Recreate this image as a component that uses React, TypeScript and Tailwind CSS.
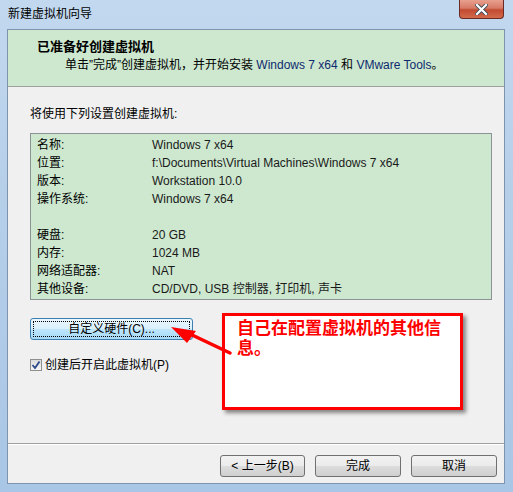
import React from 'react'

const rows: [string, string][] = [
  ['名称:', 'Windows 7 x64'],
  ['位置:', 'f:\\Documents\\Virtual Machines\\Windows 7 x64'],
  ['版本:', 'Workstation 10.0'],
  ['操作系统:', 'Windows 7 x64'],
  ['', ''],
  ['硬盘:', '20 GB'],
  ['内存:', '1024 MB'],
  ['网络适配器:', 'NAT'],
  ['其他设备:', 'CD/DVD, USB 控制器, 打印机, 声卡'],
]

function WinButton({ children, focused }: { children: React.ReactNode; focused?: boolean }) {
  return (
    <button
      className={
        focused
          ? 'h-[22px] w-full rounded-[3px] border border-[#3c7fb1] bg-[linear-gradient(#eaf6fd_0%,#d9f0fc_50%,#bee6fd_51%,#a7d9f5_100%)] p-[2px] text-[12px] text-black'
          : 'h-[22px] w-full rounded-[3px] border border-[#707070] bg-[linear-gradient(#f2f2f2_0%,#ebebeb_50%,#dddddd_51%,#cfcfcf_100%)] text-[12px] text-black'
      }
    >
      {focused ? (
        <span className='flex h-full w-full items-center justify-center border border-dotted border-black'>{children}</span>
      ) : (
        children
      )}
    </button>
  )
}

function App() {
  return (
    <div
      className='relative h-[492px] w-[513px] overflow-hidden bg-[linear-gradient(180deg,#c2d8ef_0%,#b6cfe9_40%,#a9c6e6_100%)] text-black'
      style={{ fontFamily: '"Liberation Sans", "Noto Sans CJK SC", sans-serif' }}
    >
      {/* title bar */}
      <div className='flex h-[29px] items-start justify-between'>
        <span className='pl-[8px] pt-[5px] text-[12px] leading-[18px] text-black'>新建虚拟机向导</span>
        <div className='mr-[9px] flex h-[19px] w-[45px] items-center justify-center rounded-b-[4px] border border-t-0 border-[#6b2b24] bg-[linear-gradient(#e8a08f_0%,#d67a66_45%,#c24a31_55%,#d26a4a_100%)]'>
          <svg width='13' height='11' viewBox='0 0 13 11'>
            <path d='M2 1 L11 10 M11 1 L2 10' stroke='#404a58' strokeWidth='4' strokeLinecap='square' />
            <path d='M2 1 L11 10 M11 1 L2 10' stroke='#ffffff' strokeWidth='2.2' strokeLinecap='square' />
          </svg>
        </div>
      </div>

      {/* client area */}
      <div className='ml-[7px] mr-[8px] flex h-[455px] flex-col border border-[#7e93ad] bg-[#f0f0f0]'>
        <div className='h-[57px] border-b border-[#a0a0a0] bg-[#cde8cf]'>
          <div className='pl-[29px] pt-[8px] text-[13px] font-bold leading-[18px]'>已准备好创建虚拟机</div>
          <div className='pl-[57px] pt-[1px] text-[12px] leading-[16px]'>
            单击”完成”创建虚拟机，并开始安装 <span className='text-[#0e2a6e]'>Windows 7 x64</span> 和{' '}
            <span className='text-[#0e2a6e]'>VMware Tools</span>。
          </div>
        </div>

        <div className='flex flex-1 flex-col px-[22px]'>
          <div className='pt-[19px] text-[12px] leading-[16px]'>将使用下列设置创建虚拟机:</div>
          <div className='mr-[-10px] mt-[11px] h-[167px] border border-[#8d9296] bg-[#cde8cf] pl-[6px] pt-[2px]'>
            {rows.map(([k, v], i) => (
              <div key={i} className='flex h-[18px] items-center text-[12px]'>
                <span className='w-[115px]'>{k}</span>
                <span className='text-[#1a1a1a]'>{v}</span>
              </div>
            ))}
          </div>

          <div className='mt-[16px] w-[163px]'>
            <WinButton focused>自定义硬件(C)...</WinButton>
          </div>

          <label className='mt-[16px] flex items-center gap-[3px] text-[12px]'>
            <span className='flex h-[12px] w-[12px] items-center justify-center border border-[#8f8f8f] bg-[linear-gradient(#dcdcdc,#f6f6f6)]'>
              <svg width='10' height='10' viewBox='0 0 10 10'>
                <path d='M1.5 5 L4 8 L8.5 1.5' fill='none' stroke='#2a4a8a' strokeWidth='1.8' />
              </svg>
            </span>
            创建后开启此虚拟机(P)
          </label>
        </div>

        <div className='border-t border-[#a0a0a0] shadow-[inset_0_1px_0_#ffffff]'>
          <div className='flex h-[39px] justify-end gap-[10px] pr-[7px] pt-[9px]'>
            <div className='w-[85px]'>
              <WinButton>&lt; 上一步(B)</WinButton>
            </div>
            <div className='w-[86px]'>
              <WinButton>完成</WinButton>
            </div>
            <div className='w-[86px]'>
              <WinButton>取消</WinButton>
            </div>
          </div>
        </div>
      </div>

      {/* annotation */}
      <div className='absolute left-[222px] top-[313px] h-[97px] w-[241px] border-[3px] border-[#ff0000] bg-white px-[12px] pt-[3px] text-[17px] font-bold leading-[20px] text-[#ff0000] shadow-[3px_3px_4px_rgba(0,0,0,0.45)]'>
        自己在配置虚拟机的其他信息。
      </div>
      <svg className='absolute left-[160px] top-[315px]' width='80' height='50' viewBox='0 0 80 50'>
        <path d='M70 38 L30 19' stroke='#ff0000' strokeWidth='3.5' strokeLinecap='round' />
        <path d='M11 12 L36 16 L27 28 Z' fill='#ff0000' />
      </svg>
    </div>
  )
}

export default App
